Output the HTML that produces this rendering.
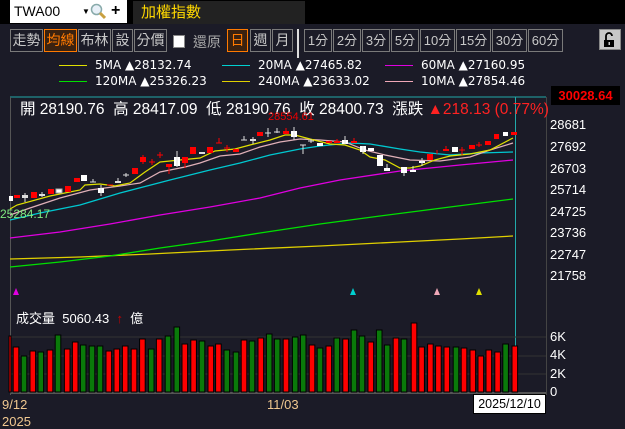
<!DOCTYPE html>
<html><head><meta charset="utf-8">
<style>
*{margin:0;padding:0;box-sizing:border-box}
body{width:625px;height:427px;overflow:hidden;background:#1b1b27;font-family:"Liberation Sans","Noto Sans CJK TC",sans-serif;position:relative;color:#ddd}
.abs{position:absolute}
.btn{position:absolute;top:29px;height:23px;border:1px solid #7a7a7a;color:#c8c8c8;font-size:14px;line-height:21px;text-align:center;background:#1b1b27}
.on{border-color:#ff7a00;color:#ff7a00;background:#3a2210}
.lg{position:absolute;font-family:"DejaVu Sans",sans-serif;font-size:12px;color:#fff;white-space:nowrap}
.lg i{display:inline-block;width:28px;height:1px;vertical-align:middle;margin-right:8px}
.ax{position:absolute;left:550px;font-size:13px;color:#fff}
</style></head><body>
<div class="abs" style="left:0;top:0;width:625px;height:24px;background:#000"></div>
<div class="abs" style="left:10px;top:0;width:117px;height:23px;background:#fff;color:#000;font-size:14px;line-height:23px;padding-left:4px">TWA00
<span style="position:absolute;left:72px;top:0;font-size:8px">▼</span>
<svg style="position:absolute;left:80px;top:3px" width="16" height="17"><circle cx="6.5" cy="6.5" r="5" fill="#e8f0f8" stroke="#8aa" stroke-width="1.5"/><line x1="10" y1="10" x2="15" y2="15" stroke="#c8a040" stroke-width="3"/></svg>
<span style="position:absolute;left:101px;top:-1px;font-weight:bold;font-size:16px">+</span></div>
<div class="abs" style="left:133px;top:1px;width:172px;height:23px;background:#222;color:#ffd800;font-size:15px;line-height:23px;padding-left:8px">加權指數</div>

<div class="btn" style="left:10px;width:33px">走勢</div>
<div class="btn on" style="left:44px;width:33px">均線</div>
<div class="btn" style="left:78px;width:33px">布林</div>
<div class="btn" style="left:112px;width:21px">設</div>
<div class="btn" style="left:134px;width:33px">分價</div>
<div class="abs" style="left:173px;top:35px;width:12px;height:13px;background:#fff;border:1px solid #888"></div>
<div class="abs" style="left:193px;top:32px;font-size:14px;color:#aaa">還原</div>
<div class="btn on" style="left:227px;width:21px">日</div>
<div class="btn" style="left:250px;width:21px">週</div>
<div class="btn" style="left:272px;width:21px">月</div>
<div class="abs" style="left:297px;top:29px;width:2px;height:29px;background:#ddd"></div>
<div class="btn" style="left:304px;width:28px;font-size:13px">1分</div>
<div class="btn" style="left:333px;width:28px;font-size:13px">2分</div>
<div class="btn" style="left:362px;width:28px;font-size:13px">3分</div>
<div class="btn" style="left:391px;width:28px;font-size:13px">5分</div>
<div class="btn" style="left:420px;width:35px;font-size:13px">10分</div>
<div class="btn" style="left:456px;width:35px;font-size:13px">15分</div>
<div class="btn" style="left:492px;width:35px;font-size:13px">30分</div>
<div class="btn" style="left:528px;width:35px;font-size:13px">60分</div>
<div class="abs" style="left:599px;top:29px;width:22px;height:21px;background:#c8c8c8;border:1px solid #888">
<svg width="20" height="19"><path d="M6 10V6a3 3 0 0 1 6 0" stroke="#000" stroke-width="1.8" fill="none"/><rect x="4" y="10" width="10" height="7" fill="#000"/><rect x="8.5" y="12" width="1.5" height="3" fill="#c8c8c8"/></svg></div>

<div class="lg" style="left:59px;top:58px"><i style="background:#e0e000"></i>5MA ▲28132.74</div>
<div class="lg" style="left:222px;top:58px"><i style="background:#00d0d0"></i>20MA ▲27465.82</div>
<div class="lg" style="left:385px;top:58px"><i style="background:#e000e0"></i>60MA ▲27160.95</div>
<div class="lg" style="left:59px;top:74px"><i style="background:#00e000"></i>120MA ▲25326.23</div>
<div class="lg" style="left:222px;top:74px"><i style="background:#e0d000"></i>240MA ▲23633.02</div>
<div class="lg" style="left:385px;top:74px"><i style="background:#f0a8b8"></i>10MA ▲27854.46</div>

<svg class="abs" style="left:0;top:0" width="625" height="427">
<line x1="10" y1="97" x2="546" y2="97" stroke="#2aa" stroke-width="1"/>
<line x1="10.5" y1="97" x2="10.5" y2="395" stroke="#555" stroke-width="1"/>
<line x1="546.5" y1="97" x2="546.5" y2="395" stroke="#444" stroke-width="1"/>
<line x1="515.5" y1="97" x2="515.5" y2="395" stroke="#2aa" stroke-width="1"/>
<line x1="10" y1="337" x2="546" y2="337" stroke="#333" />
<line x1="10" y1="356" x2="546" y2="356" stroke="#333" />
<line x1="10" y1="374" x2="546" y2="374" stroke="#333" />
<line x1="10" y1="393" x2="546" y2="393" stroke="#555" stroke-width="2"/>
<polyline fill="none" stroke="#e0d000" stroke-width="1.3" points="10,259 80,257 150,254 230,250 320,246 400,242 460,239 513,236"/>
<polyline fill="none" stroke="#00e000" stroke-width="1.3" points="10,267 60,262 110,256 160,248 210,241 260,233 320,224 380,216 450,207 513,199"/>
<polyline fill="none" stroke="#e000e0" stroke-width="1.3" points="10,238 60,232 110,224 160,215 210,207 260,198 300,188 340,180 400,171 460,165 513,160"/>
<polyline fill="none" stroke="#00c8d0" stroke-width="1.3" points="10,220 40,213 80,205 120,193 170,180 210,170 240,163 270,155 300,149 320,146 350,143 370,144 400,149 420,152 450,155 480,153 513,152"/>
<polyline fill="none" stroke="#e0b0b8" stroke-width="1.2" points="10,215 30,208 60,198 90,190 120,186 140,183 160,172 185,167 200,163 220,156 240,154 260,147 280,142 300,139 320,140 345,142 365,150 385,155 410,160 440,161 470,157 490,150 513,143"/>
<polyline fill="none" stroke="#e0e000" stroke-width="1.2" points="10,209 17,205 50,196 80,190 85,185 100,184 115,186 130,183 145,172 160,162 180,160 200,158 215,151 235,149 250,145 270,140 285,135 295,135 310,139 330,144 345,145 360,150 370,157 385,160 400,168 410,168 420,166 435,160 450,156 470,154 490,150 513,138"/>
<g stroke-width="1">
<rect x="9" y="196" width="4" height="5" fill="#fff"/>
<rect x="14" y="195" width="6" height="3" fill="#f00"/>
<rect x="22" y="195" width="6" height="3" fill="#ddd"/><line x1="25" y1="193" x2="25" y2="202" stroke="#ddd"/>
<rect x="31" y="192" width="6" height="6" fill="#f00"/>
<rect x="39" y="194" width="6" height="2" fill="#ddd"/><line x1="42" y1="192" x2="42" y2="197" stroke="#ddd"/>
<rect x="48" y="189" width="6" height="5" fill="#f00"/>
<rect x="56" y="189" width="6" height="4" fill="#fff" stroke="#aaa"/>
<rect x="65" y="186" width="6" height="6" fill="#f00"/>
<rect x="74" y="178" width="6" height="4" fill="#f00"/>
<rect x="81" y="175" width="6" height="6" fill="#fff"/>
<line x1="90" y1="182" x2="96" y2="182" stroke="#ddd"/><line x1="93" y1="179" x2="93" y2="182" stroke="#ddd"/>
<rect x="98" y="188" width="6" height="5" fill="#fff"/><line x1="101" y1="185" x2="101" y2="196" stroke="#ddd"/>
<line x1="107" y1="185" x2="113" y2="185" stroke="#f00"/>
<rect x="115" y="181" width="6" height="2" fill="#ddd"/><line x1="118" y1="178" x2="118" y2="183" stroke="#ddd"/>
<line x1="123" y1="175" x2="129" y2="175" stroke="#ddd"/><line x1="126" y1="173" x2="126" y2="177" stroke="#ddd"/>
<rect x="132" y="168" width="6" height="6" fill="#f00"/>
<rect x="140" y="157" width="6" height="5" fill="#f00"/><line x1="143" y1="155" x2="143" y2="164" stroke="#f00"/>
<line x1="149" y1="162" x2="155" y2="162" stroke="#f00"/><line x1="152" y1="159" x2="152" y2="165" stroke="#f00"/>
<line x1="157" y1="155" x2="163" y2="155" stroke="#f00"/><line x1="160" y1="152" x2="160" y2="158" stroke="#f00"/>
<rect x="166" y="164" width="6" height="3" fill="#f00"/><line x1="169" y1="164" x2="169" y2="174" stroke="#f00"/>
<rect x="174" y="157" width="6" height="9" fill="#fff"/><line x1="177" y1="151" x2="177" y2="167" stroke="#ddd"/>
<rect x="182" y="157" width="6" height="6" fill="#f00"/><line x1="185" y1="163" x2="185" y2="168" stroke="#f00"/>
<rect x="190" y="147" width="6" height="7" fill="#f00"/>
<rect x="199" y="152" width="6" height="2" fill="#ddd"/>
<rect x="207" y="147" width="6" height="6" fill="#f00"/>
<line x1="216" y1="143" x2="222" y2="143" stroke="#f00"/><line x1="219" y1="138" x2="219" y2="143" stroke="#f00"/>
<line x1="224" y1="148" x2="230" y2="148" stroke="#f00"/><line x1="227" y1="145" x2="227" y2="152" stroke="#f00"/>
<rect x="233" y="149" width="6" height="3" fill="#f00"/>
<line x1="241" y1="140" x2="247" y2="140" stroke="#ddd"/><line x1="244" y1="136" x2="244" y2="140" stroke="#ddd"/>
<rect x="250" y="139" width="6" height="2" fill="#ddd"/><line x1="253" y1="137" x2="253" y2="144" stroke="#ddd"/>
<rect x="257" y="132" width="6" height="4" fill="#f00"/>
<line x1="265" y1="133" x2="271" y2="133" stroke="#ddd"/><line x1="268" y1="128" x2="268" y2="137" stroke="#ddd"/>
<line x1="274" y1="132" x2="280" y2="132" stroke="#ddd"/><line x1="277" y1="128" x2="277" y2="133" stroke="#ddd"/>
<rect x="283" y="131" width="6" height="3" fill="#f00"/><line x1="286" y1="128" x2="286" y2="131" stroke="#f00"/>
<rect x="291" y="131" width="6" height="6" fill="#fff"/><line x1="294" y1="127" x2="294" y2="140" stroke="#ddd"/>
<line x1="300" y1="145" x2="306" y2="145" stroke="#ddd"/><line x1="303" y1="145" x2="303" y2="154" stroke="#ddd"/>
<line x1="308" y1="141" x2="314" y2="141" stroke="#ddd"/><line x1="311" y1="139" x2="311" y2="143" stroke="#ddd"/>
<rect x="317" y="143" width="6" height="3" fill="#fff"/>
<rect x="326" y="141" width="6" height="2" fill="#f00"/>
<rect x="334" y="141" width="6" height="2" fill="#f00"/><line x1="337" y1="139" x2="337" y2="143" stroke="#f00"/>
<rect x="342" y="140" width="6" height="4" fill="#fff"/><line x1="345" y1="136" x2="345" y2="144" stroke="#ddd"/>
<rect x="351" y="141" width="6" height="2" fill="#f00"/><line x1="354" y1="138" x2="354" y2="143" stroke="#f00"/>
<rect x="360" y="146" width="6" height="6" fill="#fff"/><line x1="363" y1="146" x2="363" y2="154" stroke="#ddd"/>
<rect x="368" y="148" width="6" height="3" fill="#fff"/>
<rect x="377" y="155" width="6" height="11" fill="#fff"/>
<rect x="384" y="168" width="6" height="3" fill="#fff"/><line x1="387" y1="164" x2="387" y2="168" stroke="#ddd"/>
<rect x="401" y="167" width="6" height="6" fill="#fff"/><line x1="404" y1="173" x2="404" y2="176" stroke="#ddd"/>
<rect x="410" y="170" width="6" height="2" fill="#fff"/><line x1="413" y1="166" x2="413" y2="170" stroke="#ddd"/>
<rect x="419" y="161" width="6" height="2" fill="#fff"/><line x1="422" y1="158" x2="422" y2="166" stroke="#ddd"/>
<rect x="427" y="154" width="6" height="6" fill="#f00"/>
<line x1="437" y1="150" x2="437" y2="154" stroke="#f00"/>
<rect x="443" y="149" width="6" height="2" fill="#f00"/><line x1="446" y1="146" x2="446" y2="149" stroke="#f00"/>
<rect x="452" y="147" width="6" height="5" fill="#fff"/>
<line x1="459" y1="150" x2="465" y2="150" stroke="#f00"/><line x1="462" y1="147" x2="462" y2="155" stroke="#f00"/>
<rect x="469" y="145" width="6" height="4" fill="#f00"/>
<line x1="476" y1="145" x2="482" y2="145" stroke="#f00"/><line x1="479" y1="142" x2="479" y2="147" stroke="#f00"/>
<rect x="485" y="141" width="6" height="4" fill="#f00"/>
<rect x="494" y="134" width="5" height="5" fill="#f00"/>
<rect x="503" y="132" width="5" height="4" fill="#fff"/>
<rect x="511" y="132" width="6" height="3" fill="#f00"/>
</g>
<polygon points="13,295 16,288 19,295" fill="#e000e0"/>
<polygon points="350,295 353,288 356,295" fill="#00d0d0"/>
<polygon points="434,295 437,288 440,295" fill="#f0a8b8"/>
<polygon points="476,295 479,288 482,295" fill="#e0e000"/>
<g stroke="#000" stroke-width="1" id="vol"></g>
</svg>
<script>
(function(){
var d=[[25,336,'r'],[40,347,'r'],[60,356,'g'],[82,351,'r'],[102,352,'g'],[125,350,'r'],[145,335,'g'],[168,349,'r'],[188,342,'r'],[208,345,'g'],[230,346,'g'],[250,346,'g'],[272,351,'r'],[292,349,'r'],[313,346,'r'],[335,349,'r'],[356,339,'r'],[378,349,'g'],[398,339,'r'],[420,336,'g'],[442,327,'g'],[462,344,'r'],[484,340,'r'],[505,341,'g'],[527,346,'r'],[546,344,'r'],[567,350,'g'],[590,352,'g'],[610,340,'r'],[630,341,'g'],[652,338,'r'],[673,334,'g'],[693,339,'g'],[715,339,'r'],[738,337,'g'],[758,335,'g'],[780,345,'r'],[800,348,'g'],[822,346,'r'],[842,338,'g'],[864,339,'r'],[885,330,'g'],[905,336,'g'],[927,342,'r'],[948,330,'g'],[968,345,'g'],[990,338,'r'],[1010,339,'g'],[1035,323,'r'],[1054,347,'r'],[1076,344,'r'],[1096,346,'r'],[1117,347,'r'],[1140,347,'g'],[1160,348,'r'],[1182,350,'r'],[1202,356,'r'],[1222,350,'r'],[1244,352,'r'],[1264,344,'g'],[1287,346,'r']];
var g=document.getElementById('vol'),s='';
d.forEach(function(b,i){var x=b[0]/2.5-2.8;var w=5.6;if(i==0){x=9;w=2;}s+='<rect x="'+x.toFixed(1)+'" y="'+b[1]+'" width="'+w+'" height="'+(392-b[1])+'" fill="'+(b[2]=='r'?'#f00':'#0a7a0a')+'"/>';});
g.innerHTML=s;
})();
</script>

<div class="abs" style="left:20px;top:97px;font-size:15.5px;color:#fff;white-space:nowrap">開 28190.76&nbsp; 高 28417.09&nbsp; 低 28190.76&nbsp; 收 28400.73&nbsp; 漲跌 <span style="color:#f22">▲218.13 (0.77%)</span></div>
<div class="abs" style="left:268px;top:111px;font-size:11px;color:#e00">28554.61</div>
<div class="abs" style="left:0;top:207px;font-size:12px;color:#7fe87f">25284.17</div>
<div class="abs" style="left:551px;top:86px;width:69px;height:19px;background:#000;color:#f00;font-weight:bold;font-size:13px;line-height:19px;text-align:center">30028.64</div>
<div class="ax" style="top:117px">28681</div>
<div class="ax" style="top:139px">27692</div>
<div class="ax" style="top:161px">26703</div>
<div class="ax" style="top:182px">25714</div>
<div class="ax" style="top:204px">24725</div>
<div class="ax" style="top:225px">23736</div>
<div class="ax" style="top:247px">22747</div>
<div class="ax" style="top:268px">21758</div>
<div class="ax" style="top:329px">6K</div>
<div class="ax" style="top:347px">4K</div>
<div class="ax" style="top:366px">2K</div>
<div class="ax" style="top:384px">0</div>
<div class="abs" style="left:16px;top:308px;font-size:13px;color:#fff">成交量&nbsp; 5060.43 &nbsp;<span style="color:#c00">↑</span>&nbsp; 億</div>
<div class="abs" style="left:2px;top:397px;font-size:13px;color:#f0c890">9/12</div>
<div class="abs" style="left:2px;top:414px;font-size:13px;color:#f0c890">2025</div>
<div class="abs" style="left:267px;top:397px;font-size:13px;color:#f0c890">11/03</div>
<div class="abs" style="left:473px;top:394px;width:73px;height:20px;background:#fff;border:1px solid #000;color:#000;font-size:12.5px;line-height:18px;text-align:center">2025/12/10</div>
</body></html>
